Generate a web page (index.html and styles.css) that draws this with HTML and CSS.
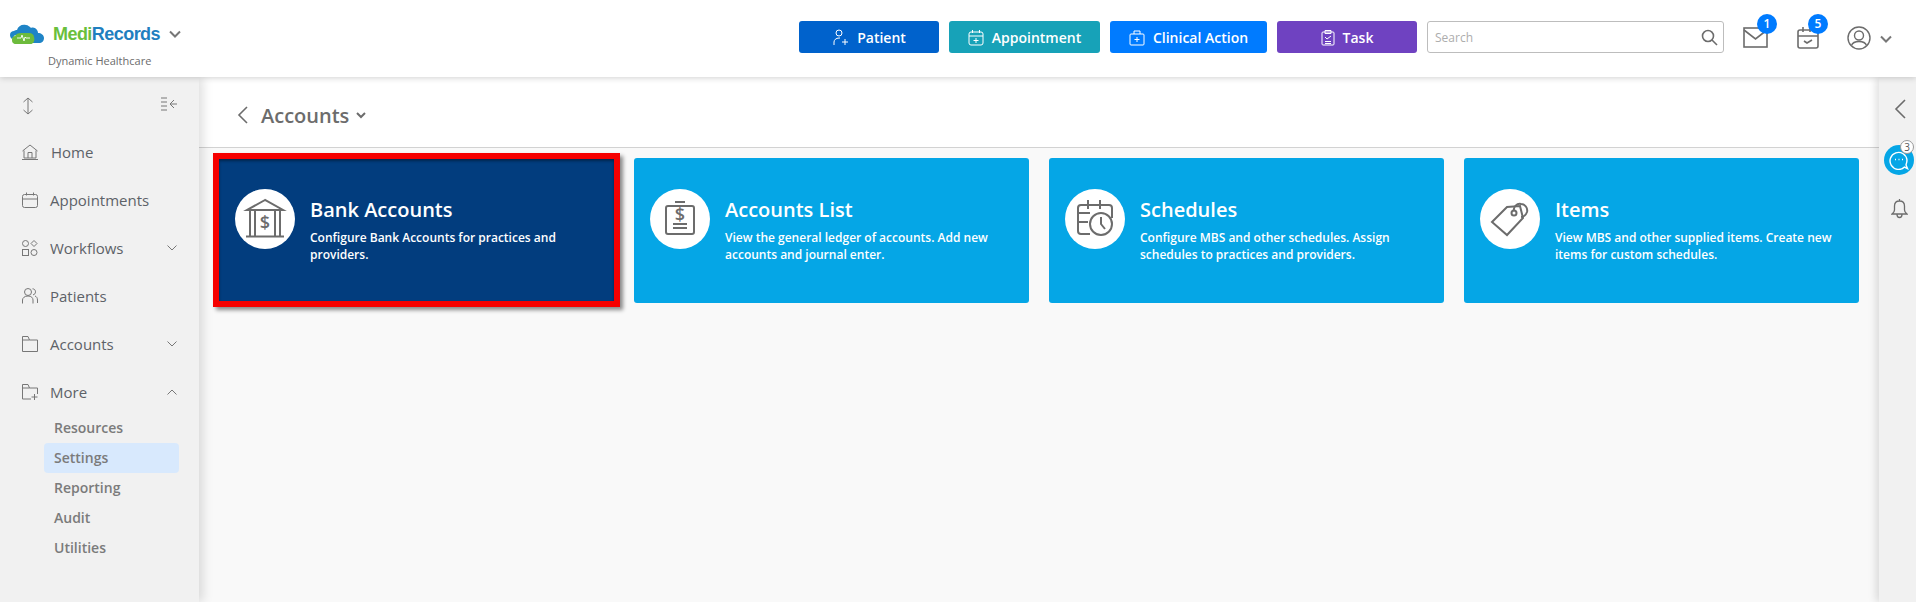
FILE: index.html
```html
<!DOCTYPE html>
<html lang="en">
<head>
<meta charset="utf-8">
<title>Accounts</title>
<link rel="stylesheet" href="styles.css">
</head>
<body>
<header class="topbar">
  <div class="brand">
    <div class="brand-row">
      <svg class="brand-cloud" width="36" height="20" viewBox="0 0 36 20">
        <path fill="#1f84c6" d="M0 11c0-3 2-4 4-4 1-1 2-1 3-1 1-4 5-6 9-5 2 0 4 2 5 3 2-1 5 0 6 2 1 1 1 3 1 3 3 0 6 2 6 5 0 3-2 5-5 5H20V11H5l-3 4c-1-1-2-2-2-4z"/>
        <path fill="#6dbb3c" d="M3 19c-1-1-1-2-1-4 0-2 2-3 3-3 1-2 3-3 6-3h8c3 0 5 2 5 4 1 2 0 5-1 6-1 1-2 1-3 1H7c-2 0-3 0-4-1z"/>
        <path class="pulse" d="M7 14h4l1-3 2 6 1-4 1 1h4"/>
      </svg>
      <span class="brand-name"><span class="brand-medi">Medi</span><span class="brand-records">Records</span></span>
      <svg class="brand-chevron" width="12" height="8" viewBox="0 0 12 8"><path d="M1 1.500l5 5 5-5"/></svg>
    </div>
    <div class="brand-sub">Dynamic Healthcare</div>
  </div>
  <div class="actions">
    <div class="btn-group">
      <a class="btn btn-patient">
        <svg width="17" height="17" viewBox="0 0 17 17"><circle cx="7" cy="4" r="3"/><path d="M2 16v-3c0-2 2-4 5-4h1M13 10v6M10 13h6"/></svg>
        <span>Patient</span>
      </a>
      <a class="btn btn-appointment">
        <svg width="16" height="17" viewBox="0 0 16 17"><rect x="1" y="3" width="14" height="13" rx="2"/><path d="M1 7h14M4.500 1v3M11.500 1v3M8 9v5M5.500 11.500h5"/></svg>
        <span>Appointment</span>
      </a>
      <a class="btn btn-clinical">
        <svg width="16" height="17" viewBox="0 0 16 17"><rect x="1" y="5" width="14" height="11" rx="1"/><path d="M5 5V2h6v3M8 8v5M5.500 10.500h5"/></svg>
        <span>Clinical Action</span>
      </a>
      <a class="btn btn-task">
        <svg width="14" height="17" viewBox="0 0 14 17"><rect x="1" y="3" width="12" height="13" rx="1"/><path d="M4 1.500h6v3H4zM4 8l2 2 4-3M4 12.500h6M4 14.500h6"/></svg>
        <span>Task</span>
      </a>
    </div>
    <div class="search">
      <span class="search-text">Search</span>
      <svg width="17" height="17" viewBox="0 0 17 17"><circle cx="7" cy="7" r="5.500"/><path d="M11 11l5 5"/></svg>
    </div>
    <div class="tool tool-mail">
      <svg width="25" height="21" viewBox="0 0 25 21"><rect x="1" y="1" width="23" height="19"/><path d="M1 3l11.500 9L24 3"/></svg>
      <span class="badge">1</span>
    </div>
    <div class="tool tool-cal">
      <svg width="22" height="23" viewBox="0 0 22 23"><rect x="1" y="4" width="20" height="18" rx="2"/><path d="M1 10h20M6 1v5M13 1v5M7 15l3 2 5-3"/></svg>
      <span class="badge">5</span>
    </div>
    <svg class="tool-user" width="24" height="24" viewBox="0 0 24 24"><circle cx="12" cy="12" r="11"/><circle cx="12" cy="9.500" r="4.500"/><path d="M4.500 19.500c1-3 4-4 7.500-4s6.500 1 7.500 4"/></svg>
    <svg class="user-chevron" width="12" height="8" viewBox="0 0 12 8"><path d="M1 1.500l5 5 5-5"/></svg>
  </div>
</header>

<div class="body-row">
  <aside class="sidebar">
    <div class="side-tools">
      <svg width="12" height="18" viewBox="0 0 12 18"><path d="M6 1v16M1.500 5L6 1l4.500 4M1.500 13L6 17l4.500-4"/></svg>
      <svg width="18" height="14" viewBox="0 0 18 14"><path d="M1 1h6M1 5h6M1 9h6M1 13h6M17 7H10M14 3l-4 4 4 4"/></svg>
    </div>
    <nav class="nav">
      <a class="nav-item nav-home">
        <svg width="16" height="16" viewBox="0 0 16 16"><path d="M.5 7L8 1l7.500 6M2 6.500V14h12V6.500M6 14V8.500h4V14M0 15.500h16"/></svg>
        <span>Home</span>
      </a>
      <a class="nav-item">
        <svg width="16" height="16" viewBox="0 0 16 16"><rect x=".5" y="2.500" width="15" height="13" rx="2"/><path d="M.5 7h15M4.500 .5v3M11.500 .5v3"/></svg>
        <span>Appointments</span>
      </a>
      <a class="nav-item">
        <svg width="16" height="16" viewBox="0 0 16 16"><circle cx="3.500" cy="3.500" r="3"/><path d="M12 .5l3 3-3 3-3-3z"/><rect x=".5" y="9.500" width="6" height="6"/><circle cx="12" cy="12.500" r="3"/></svg>
        <span>Workflows</span>
        <svg class="nav-chevron" width="10" height="6" viewBox="0 0 10 6"><path d="M.5 .5L5 5 9.500 .5"/></svg>
      </a>
      <a class="nav-item">
        <svg width="16" height="16" viewBox="0 0 16 16"><circle cx="6" cy="4" r="3.500"/><path d="M.5 15.500V12c0-2 2-4 5.500-4s5 2 5 4v3.500M10.500 .8c2 0 3 1.500 3 3s-1 3-2.500 3M13 8c1.500 .5 2.500 2 2.500 4v3"/></svg>
        <span>Patients</span>
      </a>
      <a class="nav-item">
        <svg width="16" height="16" viewBox="0 0 16 16"><path d="M.5 15.500V.5H6l1.500 3.500h8v11.500zM.5 4h7"/></svg>
        <span>Accounts</span>
        <svg class="nav-chevron" width="10" height="6" viewBox="0 0 10 6"><path d="M.5 .5L5 5 9.500 .5"/></svg>
      </a>
      <a class="nav-item">
        <svg width="16" height="16" viewBox="0 0 16 16"><path d="M9 15H.5V.5H6L7.500 4h8v6M.5 4h7M12.500 10v6M9.500 13h6"/></svg>
        <span>More</span>
        <svg class="nav-chevron" width="10" height="6" viewBox="0 0 10 6"><path d="M.5 5.500L5 1l4.500 4.500"/></svg>
      </a>
    </nav>
    <ul class="subnav">
      <li class="sub-item">Resources</li>
      <li class="sub-item sub-active">Settings</li>
      <li class="sub-item">Reporting</li>
      <li class="sub-item">Audit</li>
      <li class="sub-item">Utilities</li>
    </ul>
  </aside>

  <main class="main">
    <div class="page-head">
      <svg class="back" width="11" height="18" viewBox="0 0 11 18"><path d="M10 1L2 9l8 8"/></svg>
      <h1 class="page-title">Accounts</h1>
      <svg class="title-chevron" width="10" height="7" viewBox="0 0 10 7"><path d="M1 1l4 4 4-4"/></svg>
    </div>
    <section class="cards">
      <article class="card card-selected">
        <div class="card-icon">
          <svg width="60" height="60" viewBox="0 0 60 60">
            <path d="M30 11L12 21h36zM15 47V21M20 47V21M40 47V21M45 47V21M11 47.500h38"/>
            <text class="glyph" x="30" y="40" text-anchor="middle">$</text>
          </svg>
        </div>
        <div class="card-body">
          <h2 class="card-title">Bank Accounts</h2>
          <p class="card-text">Configure Bank Accounts for practices and providers.</p>
        </div>
      </article>
      <article class="card">
        <div class="card-icon">
          <svg width="60" height="60" viewBox="0 0 60 60">
            <rect x="16" y="17" width="28" height="28" rx="2"/>
            <path d="M25 13h10M23 35h14M23 39h14"/>
            <text class="glyph" x="30" y="32" text-anchor="middle">$</text>
          </svg>
        </div>
        <div class="card-body">
          <h2 class="card-title">Accounts List</h2>
          <p class="card-text">View the general ledger of accounts. Add new accounts and journal enter.</p>
        </div>
      </article>
      <article class="card">
        <div class="card-icon">
          <svg width="60" height="60" viewBox="0 0 60 60">
            <path d="M25 45H16a3 3 0 0 1-3-3V19a3 3 0 0 1 3-3h28a3 3 0 0 1 3 3v10M13 24h12M23 11v9M35 11v9M13 33h10"/>
            <circle cx="36" cy="35" r="11"/>
            <path d="M36 28v7l4 5"/>
          </svg>
        </div>
        <div class="card-body">
          <h2 class="card-title">Schedules</h2>
          <p class="card-text">Configure MBS and other schedules. Assign schedules to practices and providers.</p>
        </div>
      </article>
      <article class="card">
        <div class="card-icon">
          <svg width="60" height="60" viewBox="0 0 60 60">
            <path d="M12 33l15-15 13-1 3 12-16 17z"/>
            <circle cx="34" cy="24" r="2.500"/>
            <path d="M34 22c-1-4 3-8 7-7 4 0 7 4 6 8-1 3-3 5-6 5"/>
          </svg>
        </div>
        <div class="card-body">
          <h2 class="card-title">Items</h2>
          <p class="card-text">View MBS and other supplied items. Create new items for custom schedules.</p>
        </div>
      </article>
    </section>
  </main>

  <aside class="rail">
    <svg class="rail-back" width="12" height="20" viewBox="0 0 12 20"><path d="M11 1L2 10l9 9"/></svg>
    <div class="rail-chat">
      <svg width="20" height="20" viewBox="0 0 20 20"><path d="M18.500 18.500l-3-1.500A8.500 8.500 0 1 1 18 10c0 2-.5 3.500-1 5z"/><path class="dots" d="M6 9.500h1M9.500 9.500h1M13 9.500h1"/></svg>
      <span class="rail-badge">3</span>
    </div>
    <svg class="rail-bell" width="17" height="21" viewBox="0 0 17 21"><path d="M1 16h15c-1.500-1-2.500-2-2.500-4V8c0-3-2-5-5-5s-5 2-5 5v4c0 2-1 3-2.500 4zM8.500 1v2M6 16.500c0 2 1 3 2.500 3s2.500-1 2.500-3"/></svg>
  </aside>
</div>
</body>
</html>
```

FILE: styles.css
```css
* { box-sizing: border-box; }
html, body { height: 100%; }
body {
  margin: 0;
  height: 602px;
  overflow: hidden;
  display: flex;
  flex-direction: column;
  background: #f9f9f9;
  font-family: "Open Sans", "Noto Sans", sans-serif;
  color: #6c6c6c;
}
svg { display: block; flex: none; fill: none; stroke: #6c6c6c; }

/* top bar */
.topbar {
  position: relative;
  z-index: 3;
  flex: none;
  height: 77px;
  display: flex;
  align-items: flex-start;
  background: #fff;
  box-shadow: 0 1px 6px rgba(0, 0, 0, .18);
}
.brand { padding: 24px 0 0 10px; }
.brand-row { display: flex; align-items: center; height: 20px; }
.brand-cloud path { stroke: none; }
.brand-cloud .pulse { fill: none; stroke: #fff; stroke-width: .9; }
.brand-name {
  margin-left: 7px;
  font-family: "Liberation Sans", sans-serif;
  font-size: 18px;
  font-weight: 700;
  letter-spacing: -.55px;
  line-height: 20px;
}
.brand-medi { color: #6abf3c; }
.brand-records { color: #1f7fc0; }
.brand-chevron { margin-left: 9px; stroke-width: 2; stroke: #777; }
.brand-sub {
  margin: 9px 0 0 38px;
  font-size: 11px;
  line-height: 15px;
  color: #6c6c6c;
}
.actions {
  margin-left: auto;
  display: flex;
  align-items: flex-start;
  padding: 21px 24px 0 0;
}
.btn-group { display: flex; gap: 10px; }
.btn {
  height: 32px;
  display: flex;
  align-items: center;
  justify-content: center;
  gap: 8px;
  border-radius: 3px;
  color: #fff;
  font-size: 14px;
  font-weight: 600;
}
.btn svg { stroke: #fff; }
.btn-patient { width: 140px; background: #0062cc; }
.btn-appointment { width: 151px; background: #17a2b8; }
.btn-clinical { width: 157px; background: #007bff; }
.btn-task { width: 140px; background: #6f42c1; }
.search {
  width: 297px;
  height: 32px;
  margin-left: 10px;
  padding: 0 5px 0 7px;
  display: flex;
  align-items: center;
  justify-content: space-between;
  background: #fff;
  border: 1px solid #bdbdbd;
  border-radius: 3px;
}
.search-text { font-size: 12px; color: #adadad; }
.search svg { stroke-width: 1.6; }
.tool { position: relative; }
.tool svg { stroke-width: 1.6; }
.tool-mail { margin: 6px 0 0 19px; }
.tool-cal { margin: 5px 0 0 29px; }
.badge {
  position: absolute;
  top: -13px;
  right: -9px;
  width: 20px;
  height: 20px;
  border-radius: 50%;
  background: #007bff;
  color: #fff;
  font-size: 12px;
  font-weight: 600;
  line-height: 20px;
  text-align: center;
}
.tool-cal .badge { top: -12px; right: -9px; }
.tool-user { margin: 5px 0 0 28px; stroke-width: 1.4; }
.user-chevron { margin: 14px 0 0 9px; stroke-width: 2; stroke: #777; }

/* body layout */
.body-row { flex: 1; min-height: 0; display: flex; }
.sidebar {
  position: relative;
  z-index: 2;
  flex: none;
  width: 199px;
  background: #f1f1f1;
  box-shadow: 4px 0 10px rgba(0, 0, 0, .13);
}
.side-tools {
  height: 51px;
  padding: 20px 21px 0 22px;
  display: flex;
  justify-content: space-between;
  align-items: flex-start;
}
.side-tools svg { stroke: #777; }
.nav { display: flex; flex-direction: column; }
.nav-item {
  height: 48px;
  padding: 0 22px 0 22px;
  display: flex;
  align-items: center;
  gap: 12px;
  font-size: 15px;
  font-weight: 500;
  color: #5d6268;
}
.nav-item svg { stroke: #777; }
.nav-item span { flex: 1; }
.nav-home { gap: 13px; }
.subnav {
  list-style: none;
  margin: -3px 0 0;
  padding: 0 20px 0 44px;
}
.sub-item {
  height: 30px;
  padding-left: 10px;
  font-size: 14px;
  font-weight: 600;
  line-height: 30px;
  color: #7b7b7b;
  border-radius: 4px;
}
.sub-active { background: #d8e9fd; }

/* main */
.main { flex: 1; min-width: 0; }
.page-head {
  height: 71px;
  padding: 6px 0 0 38px;
  display: flex;
  align-items: center;
  background: #fff;
  border-bottom: 1px solid #d2d2d2;
}
.back { stroke: #6c6c6c; stroke-width: 1.6; }
.page-title {
  margin: 0 0 0 13px;
  font-size: 20px;
  font-weight: 600;
  color: #6c6c6c;
}
.title-chevron { margin-left: 7px; stroke-width: 2; }
.cards {
  padding: 10px 20px 0 20px;
  display: grid;
  grid-template-columns: repeat(4, 395px);
  gap: 20px;
}
.card {
  position: relative;
  height: 145px;
  padding: 31px 16px 0;
  display: flex;
  gap: 15px;
  background: #05a6e6;
  border-radius: 3px;
  color: #fff;
}
.card-selected {
  background: #023d7e;
  border-radius: 0;
  outline: 6px solid #f50000;
  outline-offset: 0;
  height: 142px;
  margin-top: 1px;
  padding-top: 30px;
  box-shadow: 3px 3px 4px 6px rgba(0, 0, 0, .45), inset 0 2px 3px rgba(0, 0, 0, .4);
}
.card-icon {
  flex: none;
  width: 60px;
  height: 60px;
  border-radius: 50%;
  background: #fff;
}
.card-icon svg { stroke: #6c6c6c; stroke-width: 2; }
.glyph {
  font-family: "Open Sans", sans-serif;
  font-size: 18px;
  font-weight: 600;
  fill: #6c6c6c;
  stroke: none;
}
.card-title {
  margin: 7px 0 0;
  font-size: 20px;
  font-weight: 600;
  line-height: 27px;
}
.card-text {
  margin: 6px 0 0;
  font-size: 12px;
  font-weight: 600;
  line-height: 17px;
}

/* right rail */
.rail {
  position: relative;
  z-index: 2;
  flex: none;
  width: 37px;
  padding: 22px 0 0 15px;
  background: #f1f1f1;
  box-shadow: -3px 0 8px rgba(0, 0, 0, .13);
}
.rail-back { stroke: #6c6c6c; stroke-width: 1.6; }
.rail-chat {
  position: relative;
  width: 30px;
  height: 30px;
  margin: 26px 0 0 -10px;
  padding: 5px;
  border-radius: 50%;
  background: #05a6e6;
}
.rail-chat svg { stroke: #fff; stroke-width: 1.4; }
.rail-badge {
  position: absolute;
  top: -5px;
  right: 0;
  width: 14px;
  height: 14px;
  border-radius: 50%;
  border: 1px solid #999;
  background: #fff;
  color: #555;
  font-size: 10px;
  line-height: 12px;
  text-align: center;
}
.rail-bell { margin: 23px 0 0 -3px; stroke-width: 1.3; }
```
